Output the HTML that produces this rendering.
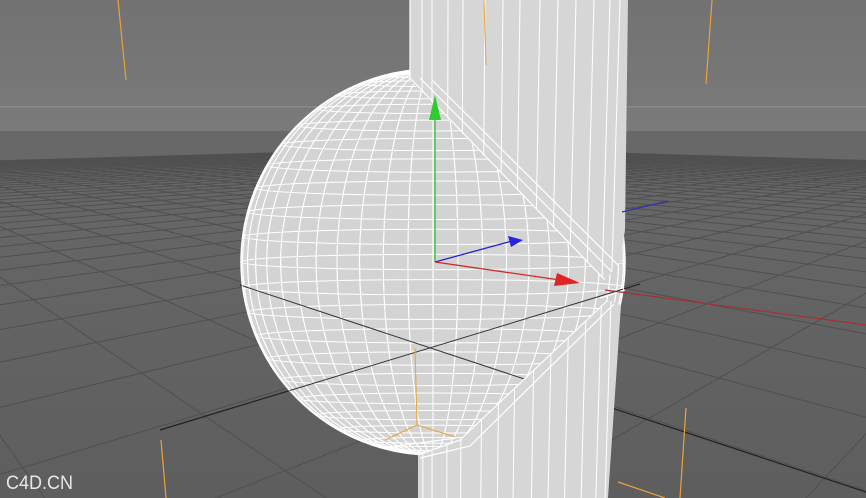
<!DOCTYPE html><html><head><meta charset="utf-8"><style>
html,body{margin:0;padding:0;width:866px;height:498px;overflow:hidden;background:#6a6a6a}
svg{display:block}
</style></head><body>
<svg id="s" width="866" height="498" xmlns="http://www.w3.org/2000/svg">
<defs>
<linearGradient id="sky" x1="0" y1="0" x2="0" y2="1"><stop offset="0" stop-color="#727272"/><stop offset="1" stop-color="#7a7a7a"/></linearGradient>
<linearGradient id="fl" x1="0" y1="0" x2="0" y2="1"><stop offset="0" stop-color="#6c6c6c"/><stop offset="1" stop-color="#5e5e5e"/></linearGradient>
<clipPath id="sc"><ellipse cx="433" cy="262" rx="192" ry="193"/></clipPath>
<clipPath id="cc"><polygon points="410,0 628,0 625,230 620,262 605,280 410,80"/><polygon points="608,300 621,305 608,498 418,498 418,455 460,440"/></clipPath>
<clipPath id="floor"><rect x="0" y="131" width="866" height="368"/></clipPath>
</defs>
<rect width="866" height="498" fill="url(#fl)"/>
<rect width="866" height="131" fill="url(#sky)"/>
<rect x="0" y="106" width="866" height="1.5" fill="#8a8a8a"/>
<g id="grid" clip-path="url(#floor)" stroke="#505050" stroke-width="1"></g>
<line x1="160" y1="430" x2="640" y2="284" stroke="#222" stroke-width="1.2"/>
<line x1="240" y1="285" x2="866" y2="492" stroke="#222" stroke-width="1.2"/>
<g stroke="#e8a33a" stroke-width="1.2">
<line x1="118" y1="0" x2="126" y2="80"/><line x1="712" y1="0" x2="706" y2="84"/>
<line x1="161" y1="440" x2="166" y2="498"/><line x1="686" y1="408" x2="680" y2="498"/>
<line x1="618" y1="482" x2="665" y2="498"/><line x1="410" y1="0" x2="412" y2="80"/>
</g>
<ellipse cx="433" cy="262" rx="192" ry="193" fill="#d3d3d3"/>
<g id="sw" clip-path="url(#sc)" stroke="#fff" stroke-width="1" fill="none"></g>
<ellipse cx="433" cy="262" rx="192" ry="193" fill="none" stroke="#fff" stroke-width="1.5"/>
<g stroke="#333" stroke-width="1" clip-path="url(#sc)">
<line x1="240" y1="285" x2="866" y2="492"/>
<line x1="160" y1="430" x2="640" y2="284"/>
</g>
<rect x="0" y="0" width="866" height="498" fill="#d6d6d6" clip-path="url(#cc)"/>
<g id="cw" clip-path="url(#cc)" stroke="#fff" stroke-width="1"></g>
<g stroke="#fff" stroke-width="1.2" fill="none">
<path d="M410,78 L605,280"/><path d="M420,78 L612,272"/><path d="M432,80 L618,265"/>
<path d="M608,300 L460,440 L418,455"/><path d="M614,304 L470,446 L420,458"/><path d="M382,448 L456,438"/>
<line x1="410" y1="0" x2="410" y2="78"/>
<line x1="600" y1="298" x2="625" y2="290"/>
</g>
<g stroke="#e8a33a" stroke-width="1">
<line x1="484" y1="0" x2="486" y2="65"/>
<line x1="415" y1="348" x2="417" y2="425"/><line x1="417" y1="425" x2="385" y2="440"/><line x1="417" y1="425" x2="455" y2="437"/>
</g>
<line x1="605" y1="290" x2="866" y2="325" stroke="#a83030" stroke-width="1.2"/>
<line x1="622" y1="212" x2="668" y2="201" stroke="#3030b0" stroke-width="1.2"/>
<line x1="435" y1="262" x2="435" y2="118" stroke="#30c030" stroke-width="1.3"/>
<polygon points="435,95 429,120 441,120" fill="#2ecc2e"/>
<line x1="435" y1="262" x2="512" y2="241" stroke="#2424d0" stroke-width="1.3"/>
<polygon points="523,240 508,236 511,247" fill="#2525e0"/>
<line x1="435" y1="262" x2="560" y2="280" stroke="#d02a2a" stroke-width="1.3"/>
<polygon points="580,283 557,273 554,286" fill="#e02424"/>
<text x="6" y="489" font-family="Liberation Sans, sans-serif" font-size="19" fill="#e6e6e6" textLength="67" lengthAdjust="spacingAndGlyphs">C4D.CN</text>
</svg>
<script>
var NS="http://www.w3.org/2000/svg";
function L(g,x1,y1,x2,y2){var l=document.createElementNS(NS,"line");l.setAttribute("x1",x1);l.setAttribute("y1",y1);l.setAttribute("x2",x2);l.setAttribute("y2",y2);g.appendChild(l);}
var g=document.getElementById("grid");
var f=685,cx=433,hy=128,h=1,Z0=f/217,X0=-0.014;
var d1=[-0.69,0.724],d2=[0.724,0.69],s=0.55,N=40,T=40;
function P(X,Z){return [cx+f*X/Z,hy+f*h/Z];}
function line3(ax,az,bx,bz){var m=0.08;if(az<m&&bz<m)return;if(az<m){var k=(m-az)/(bz-az);ax=ax+k*(bx-ax);az=m;}if(bz<m){var k=(m-bz)/(az-bz);bx=bx+k*(ax-bx);bz=m;}var p=P(ax,az),q=P(bx,bz);L(g,p[0].toFixed(1),p[1].toFixed(1),q[0].toFixed(1),q[1].toFixed(1));}
for(var i=-N;i<=N;i++){
 var ox=X0+i*s*d2[0],oz=Z0+i*s*d2[1];
 line3(ox-T*d1[0]*s,oz-T*d1[1]*s,ox+T*d1[0]*s,oz+T*d1[1]*s);
 ox=X0+i*s*d1[0];oz=Z0+i*s*d1[1];
 line3(ox-T*d2[0]*s,oz-T*d2[1]*s,ox+T*d2[0]*s,oz+T*d2[1]*s);
}
var sw=document.getElementById("sw");
for(var a=-90;a<=90;a+=7.5){var r=a*Math.PI/180;var y=262-193*Math.sin(r);var rx=192*Math.cos(r);
 var e=document.createElementNS(NS,"ellipse");e.setAttribute("cx",433);e.setAttribute("cy",y);e.setAttribute("rx",rx);e.setAttribute("ry",Math.max(0.1,rx*0.04));sw.appendChild(e);}
for(var b=0;b<180;b+=7.5){var r=b*Math.PI/180;var rx=Math.abs(192*Math.cos(r));
 var e=document.createElementNS(NS,"ellipse");e.setAttribute("cx",433);e.setAttribute("cy",262);e.setAttribute("rx",Math.max(0.1,rx));e.setAttribute("ry",193);sw.appendChild(e);}
var cw=document.getElementById("cw");
[422,432,448,463,485,503,520,540,558,576,594,610,620].forEach(function(x){L(cw,x,0,x-(x-433)*0.08,498);});
</script>
</body></html>
